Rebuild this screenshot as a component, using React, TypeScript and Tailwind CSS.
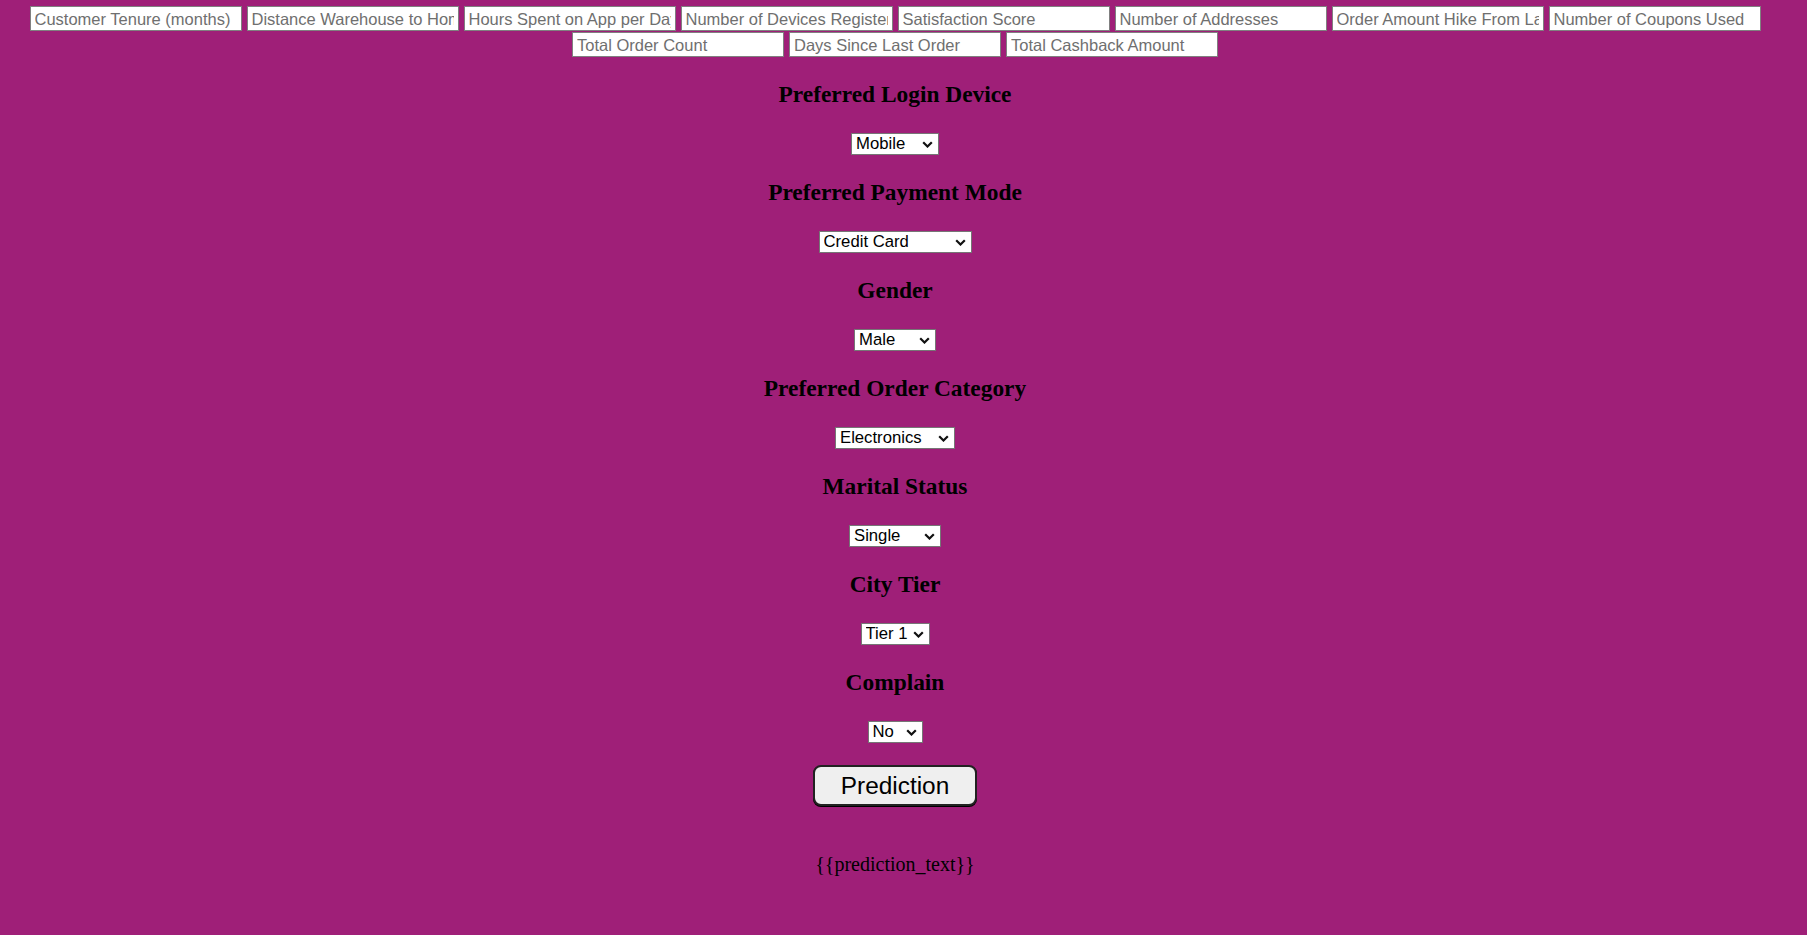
const fields = [
  "Customer Tenure (months)",
  "Distance Warehouse to Home (km)",
  "Hours Spent on App per Day",
  "Number of Devices Registered",
  "Satisfaction Score",
  "Number of Addresses",
  "Order Amount Hike From Last Year (%)",
  "Number of Coupons Used",
  "Total Order Count",
  "Days Since Last Order",
  "Total Cashback Amount",
];

const choices: { label: string; width: string; options: string[] }[] = [
  { label: "Preferred Login Device", width: "w-[88px]", options: ["Mobile", "Computer"] },
  {
    label: "Preferred Payment Mode",
    width: "w-[153px]",
    options: ["Credit Card", "Debit Card", "E wallet", "UPI", "Cash on Delivery"],
  },
  { label: "Gender", width: "w-[82px]", options: ["Male", "Female"] },
  {
    label: "Preferred Order Category",
    width: "w-[120px]",
    options: ["Electronics", "Mobile", "Fashion", "Grocery", "Others"],
  },
  { label: "Marital Status", width: "w-[92px]", options: ["Single", "Married", "Divorced"] },
  { label: "City Tier", width: "w-[69px]", options: ["Tier 1", "Tier 2", "Tier 3"] },
  { label: "Complain", width: "w-[55px]", options: ["No", "Yes"] },
];

function Chevron() {
  return (
    <svg
      viewBox="0 0 11 7"
      className="pointer-events-none absolute right-[6px] top-[8px] h-[7px] w-[11px]"
    >
      <path d="M1.2 1.2l4.3 4.3 4.3-4.3" fill="none" stroke="#111" strokeWidth="2.2" />
    </svg>
  );
}

export default function App() {
  return (
    <div className="min-h-screen bg-[#9f1f78] pr-[17px] text-center font-['Liberation_Serif',serif] text-[20px] text-black">
      <div className="flex flex-wrap justify-center gap-x-[5px] gap-y-[1px] pt-[6px]">
        {fields.map((f) => (
          <input
            key={f}
            type="text"
            placeholder={f}
            className="h-[25px] w-[212px] border border-[#808080] bg-white px-[4px] pt-[1px] font-['Liberation_Sans',Arial,sans-serif] text-[16.5px] leading-[19px] text-black placeholder:text-[#6f6f6f]"
          />
        ))}
      </div>

      {choices.map((c) => (
        <div key={c.label}>
          <h3 className="mt-[24px] mb-[23px] text-[23.4px] font-bold leading-[27px]">{c.label}</h3>
          <div className="flex h-[24px] items-end justify-center">
            <div className={`relative ${c.width} h-[22px]`}>
              <select
                defaultValue={c.options[0]}
                className="block h-[22px] w-full appearance-none border border-[#767676] bg-white pl-[4px] font-['Liberation_Sans',Arial,sans-serif] text-[16.7px] leading-[20px] text-black"
              >
                {c.options.map((o) => (
                  <option key={o}>{o}</option>
                ))}
              </select>
              <Chevron />
            </div>
          </div>
        </div>
      ))}

      <div className="mt-[22px] flex justify-center">
        <button className="h-[41px] w-[164px] rounded-[8px] border-2 border-[#222] bg-[#efefef] font-['Liberation_Sans',Arial,sans-serif] text-[24.4px] leading-[28px] text-black shadow-[0_1px_0_#000]">
          Prediction
        </button>
      </div>

      <p className="mt-[47px] leading-[23px]">{"{{prediction_text}}"}</p>
    </div>
  );
}
